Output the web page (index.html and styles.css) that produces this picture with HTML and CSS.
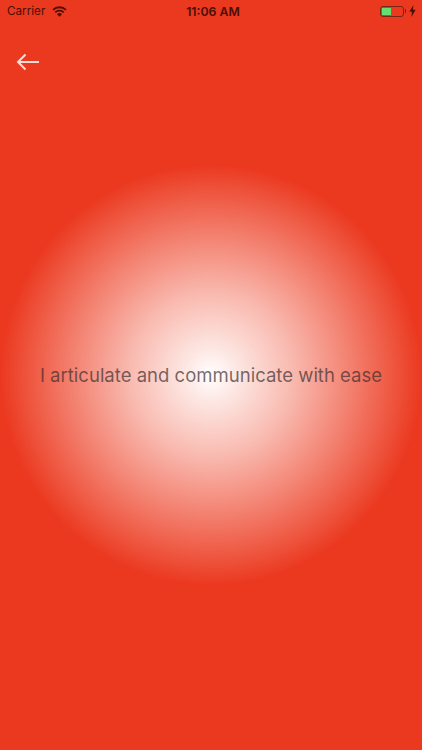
FILE: index.html
```html
<!DOCTYPE html>
<html lang="en">
<head>
<meta charset="utf-8">
<title>Affirmation</title>
<link rel="stylesheet" href="styles.css">
</head>
<body>
<div class="screen">
  <header class="status">
    <div class="status-left">
      <span class="carrier">Carrier</span>
      <svg class="wifi" viewBox="0 0 16 12" width="15" height="11"><path d="M8 11.8 5.3 8.9a3.8 3.8 0 0 1 5.4 0Z" fill="#4a0f06"/><path d="M3.4 6.9A6.6 6.6 0 0 1 12.6 6.9" fill="none" stroke="#4a0f06" stroke-width="2"/><path d="M1 4.2A10 10 0 0 1 15 4.2" fill="none" stroke="#4a0f06" stroke-width="2"/></svg>
    </div>
    <div class="time">11:06 AM</div>
    <div class="status-right">
      <div class="battery"><div class="level"></div></div>
      <div class="nub"></div>
      <svg class="bolt" viewBox="0 0 7 12" width="7" height="12"><path d="M4.4 0 0.4 6.8H3L2.4 12 6.6 4.8H3.9Z" fill="#4a0f06"/></svg>
    </div>
  </header>
  <button class="back" aria-label="Back">
    <svg viewBox="0 0 24 18" width="24" height="18"><path d="M23 9H2M9.5 1.5 2 9l7.5 7.5" fill="none" stroke="#fbdcd5" stroke-width="2"/></svg>
  </button>
  <main class="stage">
    <div class="orb"><p class="phrase">I articulate and communicate with ease</p></div>
  </main>
</div>
</body>
</html>
```
FILE: styles.css
```css
html, body { margin: 0; padding: 0; }
body { background: #eb3920; font-family: Inter, "Liberation Sans", sans-serif; }
.screen { width: 422px; height: 750px; background: #eb3920; display: flex; flex-direction: column; overflow: hidden; }
.status { height: 22px; flex: none; display: grid; grid-template-columns: 1fr auto 1fr; align-items: center; padding: 0 6px 0 7px; color: #4a0f06; font-size: 12px; box-sizing: border-box; }
.status-left { display: flex; align-items: center; gap: 7px; }
.carrier { font-size: 11.7px; }
.time { font-weight: 600; font-size: 12.3px; margin-left: 3px; }
.status-right { display: flex; align-items: center; justify-content: flex-end; }
.battery { width: 24px; height: 11px; border: 1px solid #7a2412; border-radius: 3px; padding: 1px; box-sizing: border-box; }
.level { width: 9px; height: 100%; background: #68dc74; }
.nub { width: 1.5px; height: 4px; background: #7a2412; margin: 0 3px 0 1px; }
.back { flex: none; align-self: flex-start; margin: 29px 0 0 16px; padding: 0; border: 0; background: none; height: 22px; display: flex; align-items: center; }
.stage { flex: 1; display: flex; justify-content: center; padding-top: 92px; }
.orb { width: 420px; height: 420px; flex: none; border-radius: 50%; display: flex; align-items: center; justify-content: center; background: radial-gradient(circle closest-side, #fff 0%, #fde8e4 12%, #f9bbb1 38%, #f48a7a 62%, #ef5c46 84%, #eb3920 100%); }
.phrase { margin: 0; font-size: 18.55px; color: rgba(60, 45, 45, 0.7); white-space: nowrap; }
```
